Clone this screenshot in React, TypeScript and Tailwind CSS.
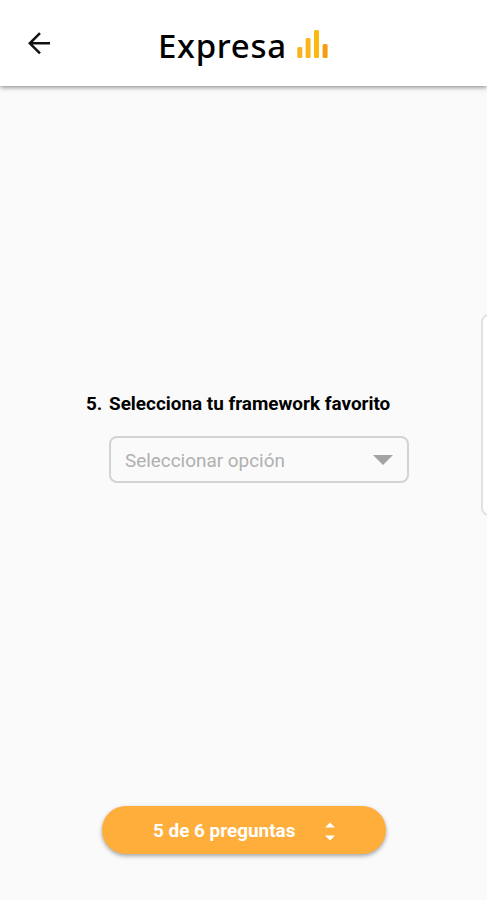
const bars = [
  { x: 0.3, y: 17, height: 11, color: '#f9b322' },
  { x: 8.6, y: 8, height: 20, color: '#fbb61d' },
  { x: 17, y: 0, height: 28, color: '#fbb80f' },
  { x: 25.6, y: 14, height: 14, color: '#f79c12' },
];

function Logo() {
  return (
    <div className="flex items-start">
      <h1 className="w-[129px] font-['Noto_Sans'] text-[33px] leading-[44px] font-medium tracking-[0.7px] whitespace-nowrap text-black">
        Expresa
      </h1>
      <svg className="mt-[6px] ml-[10px] h-[28px] w-[32px]" viewBox="0 0 32 28">
        {bars.map((bar) => (
          <rect key={bar.x} x={bar.x} y={bar.y} width="5" height={bar.height} rx="1.5" fill={bar.color} />
        ))}
      </svg>
    </div>
  );
}

function Header() {
  return (
    <header className="flex h-[86px] shrink-0 items-start bg-white shadow-[0_1px_5px_rgba(0,0,0,0.5)]">
      <button aria-label="Volver" className="mt-[32px] ml-[28px] h-[23px] w-[23px]">
        <svg viewBox="0 0 23 23" fill="none" stroke="#111" strokeWidth="2.5">
          <path d="M22 11.3H2M12 1.2L1.8 11.3L12 21.4" />
        </svg>
      </button>
      <div className="mt-[24px] ml-[107px]">
        <Logo />
      </div>
    </header>
  );
}

export default function App() {
  return (
    <div className="flex h-[900px] w-[487px] flex-col overflow-hidden bg-[#fafafa] font-['Roboto',sans-serif]">
      <Header />

      <main className="flex flex-1 items-start">
        {/* Question */}
        <section className="mt-[306px] ml-[86px] w-[323px]">
          <div className="flex h-[24px] text-[18.9px] leading-[24px] font-bold whitespace-nowrap text-black">
            <span className="w-[23px] shrink-0">5.</span>
            <h2>Selecciona tu framework favorito</h2>
          </div>
          <button className="mt-[20px] ml-[23px] flex h-[47px] w-[300px] items-center justify-between rounded-[8px] border-2 border-[#d3d3d3] pr-[14px] pl-[14px]">
            <span className="pt-[3px] text-[18.9px] text-[#b0b0b0]">Seleccionar opción</span>
            <svg className="h-[10px] w-[20px]" viewBox="0 0 20 10">
              <path d="M0 0H20L10 10Z" fill="#a3a3a3" />
            </svg>
          </button>
        </section>

        {/* Edge of the next card */}
        <aside className="mt-[228px] ml-[72px] h-[202px] w-[40px] shrink-0 rounded-[8px] border-2 border-[#e1e1e1] bg-white" />
      </main>

      <footer className="flex h-[94px] shrink-0 items-start pl-[102px]">
        <button className="flex h-[48px] w-[284px] items-center rounded-full bg-[#ffae3b] pl-[51px] text-white shadow-[0_2px_4px_rgba(0,0,0,0.35)]">
          <span className="w-[143px] pt-[2px] text-left text-[18.9px] font-bold whitespace-nowrap">5 de 6 preguntas</span>
          <svg className="mt-[2px] ml-[29px] h-[19px] w-[10px]" viewBox="0 0 10 19">
            <path d="M0 5.5L5 0.5L10 5.5ZM0 13.5H10L5 18.5Z" fill="#fff" />
          </svg>
        </button>
      </footer>
    </div>
  );
}
